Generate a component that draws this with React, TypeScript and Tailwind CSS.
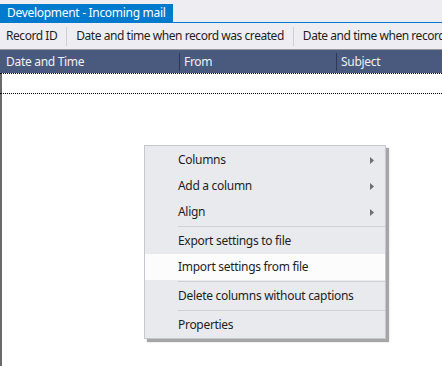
import React from "react";

const font = { fontFamily: '"Noto Sans", "Open Sans", sans-serif' };

function Arrow() {
  return (
    <svg width="4" height="7" viewBox="0 0 4 7" className="block">
      <path d="M0 0 L4 3.5 L0 7 Z" fill="#6f6f6f" />
    </svg>
  );
}

function Item({ label, arrow, hl }: { label: string; arrow?: boolean; hl?: boolean }) {
  return (
    <div className={`h-[26px] flex items-center pl-[33px] pr-[11px] ${hl ? "bg-[#fcfcfc]" : ""}`}>
      <span className="flex-1 text-[12px] text-[#1e1e1e] tracking-[-0.3px]">{label}</span>
      {arrow ? <Arrow /> : null}
    </div>
  );
}

function Sep() {
  return (
    <div className="h-[3px] flex items-center pl-[33px]">
      <div className="h-px w-full bg-[#cfd1d6]" />
    </div>
  );
}

export default function App() {
  return (
    <div className="w-[442px] h-[366px] bg-white relative overflow-hidden flex flex-col" style={font}>
      <div className="bg-[#eeeef2] pt-[4px]">
        <div className="flex">
          <div className="bg-[#007acc] h-[18px] px-[7px] flex items-center text-white text-[12px] tracking-[-0.3px]">
            Development - Incoming mail
          </div>
        </div>
        <div className="h-[1px] bg-[#007acc]" />
      </div>
      <div className="bg-[#eeeef2] h-[26px] flex items-center text-[12px] text-[#1e1e1e] tracking-[-0.45px] whitespace-nowrap overflow-hidden">
        <div className="pl-[6px] pr-[9px] shrink-0">Record ID</div>
        <div className="w-px h-[19px] bg-[#cccedb] shrink-0" />
        <div className="pl-[9px] pr-[9px] shrink-0">Date and time when record was created</div>
        <div className="w-px h-[19px] bg-[#cccedb] shrink-0" />
        <div className="pl-[9px] shrink-0">Date and time when record was created</div>
      </div>
      <div className="h-px bg-[#9a9a9a]" />
      <div className="flex-1 flex flex-col border-l-2 border-[#6a6a6a]">
        <div className="h-[23px] bg-[#4a5a7e] flex items-center text-[12px] text-[#f0f0f0] tracking-[-0.3px] whitespace-nowrap -ml-[2px]">
          <div className="w-[179px] pl-[6px]">Date and Time</div>
          <div className="w-px h-[18px] bg-[#2c3856]" />
          <div className="w-[156px] pl-[4px]">From</div>
          <div className="w-px h-[18px] bg-[#2c3856]" />
          <div className="pl-[4px]">Subject</div>
        </div>
        <div className="h-[21px] border-y border-dotted border-black -ml-[2px]" />
      </div>

      <div className="absolute left-[144px] top-[145px] w-[242px] bg-[#e8eaee] border border-[#c5c7cc] shadow-[3px_3px_1px_rgba(0,0,0,0.35)] pt-[1px]" style={font}>
        <Item label="Columns" arrow />
        <Item label="Add a column" arrow />
        <Item label="Align" arrow />
        <Sep />
        <Item label="Export settings to file" />
        <Item label="Import settings from file" hl />
        <Sep />
        <Item label="Delete columns without captions" />
        <Sep />
        <Item label="Properties" />
      </div>
    </div>
  );
}
